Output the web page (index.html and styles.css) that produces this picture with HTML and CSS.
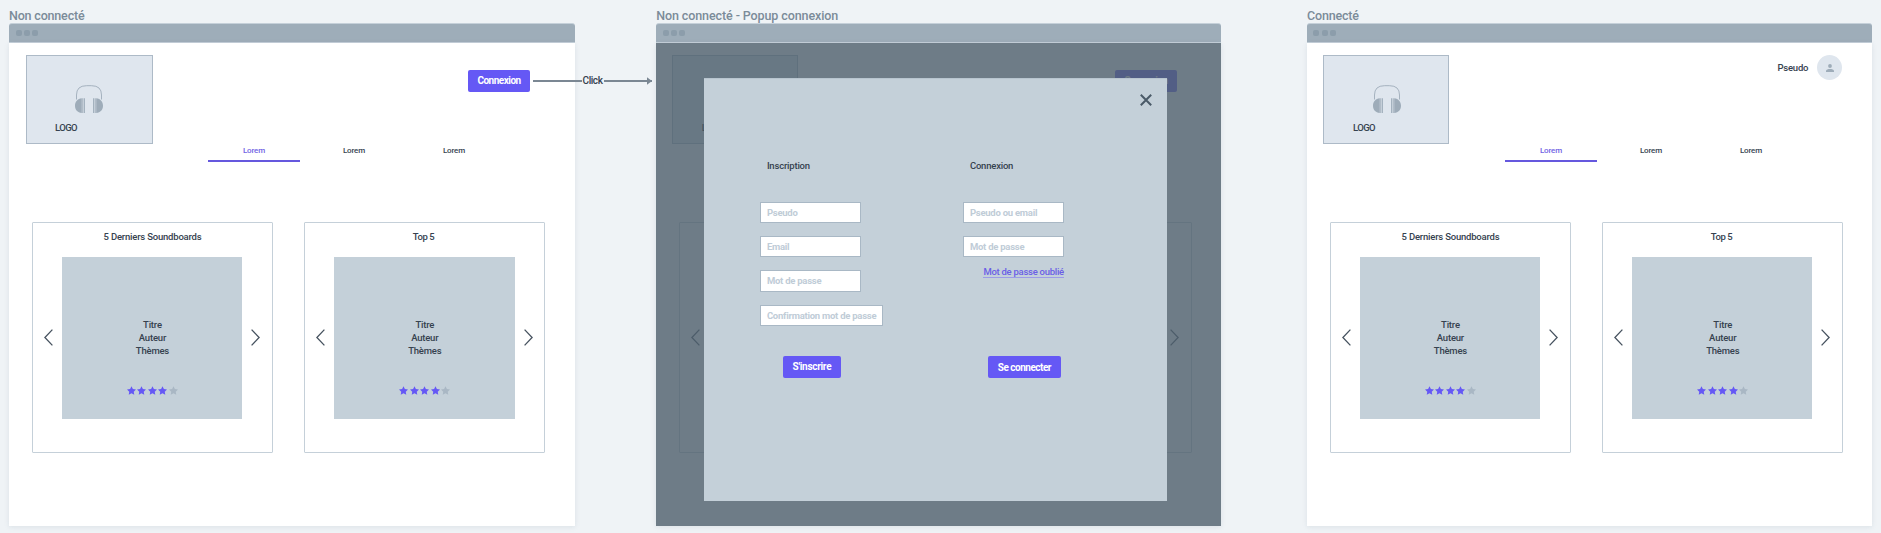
FILE: index.html
```html
<!DOCTYPE html>
<html lang="fr">
<head>
<meta charset="utf-8">
<title>Soundboards - Wireframes</title>
<link rel="stylesheet" href="styles.css">
</head>
<body>
<svg class="defs" aria-hidden="true">
  <symbol id="headphones" viewBox="0 0 28 28">
    <path d="M1.5 14.500V10Q1.500 .7 11.500 .7H16.500Q26.500 .7 26.500 10V14.500" fill="none" stroke="#9eacb9" stroke-width=".9"/>
    <path d="M6.800 13.300V28C2.500 27.700 0 24.500 0 20.700S2.500 13.600 6.800 13.300ZM7.300 13.300H8.300V28H7.300ZM8.900 13.300H9.900V28H8.900ZM21.200 13.300V28C25.500 27.700 28 24.500 28 20.700S25.500 13.600 21.200 13.300ZM19.700 13.300H20.700V28H19.700ZM18.100 13.300H19.100V28H18.100Z" fill="#9eacb9"/>
  </symbol>
  <symbol id="prev" viewBox="0 0 9 17"><path d="M8.400 .6L.9 8.500L8.400 16.400" fill="none" stroke="#46525f" stroke-width="1.300"/></symbol>
  <symbol id="next" viewBox="0 0 9 17"><path d="M.6 .6L8.100 8.500L.6 16.400" fill="none" stroke="#46525f" stroke-width="1.300"/></symbol>
  <symbol id="star" viewBox="0 0 24 24"><path d="M12 .6l3.700 7.500 8.300 1.200-6 5.800 1.400 8.300L12 19.500l-7.400 3.900L6 15.100 0 9.300l8.300-1.200z"/></symbol>
</svg>

<main class="board">
  <section class="frame">
    <h2 class="frame-title t-short">Non connecté</h2>
    <div class="chrome"><i></i><i></i><i></i></div>
    <div class="page">
      <header class="header first">
        <div class="logo"><svg class="headphones"><use href="#headphones"/></svg><span>LOGO</span></div>
        <button class="btn login">Connexion</button>
      </header>
      <nav class="tabs"><a class="active">Lorem</a><a>Lorem</a><a>Lorem</a></nav>
      <div class="cards">
        <article class="card">
          <h3>5 Derniers Soundboards</h3>
          <div class="slider">
            <svg class="arrow"><use href="#prev"/></svg>
            <div class="slide"><p>Titre<br>Auteur<br>Thèmes</p><div class="stars"><svg><use href="#star"/></svg><svg><use href="#star"/></svg><svg><use href="#star"/></svg><svg><use href="#star"/></svg><svg class="off"><use href="#star"/></svg></div></div>
            <svg class="arrow"><use href="#next"/></svg>
          </div>
        </article>
        <article class="card">
          <h3 class="top">Top 5</h3>
          <div class="slider wide">
            <svg class="arrow"><use href="#prev"/></svg>
            <div class="slide"><p>Titre<br>Auteur<br>Thèmes</p><div class="stars"><svg><use href="#star"/></svg><svg><use href="#star"/></svg><svg><use href="#star"/></svg><svg><use href="#star"/></svg><svg class="off"><use href="#star"/></svg></div></div>
            <svg class="arrow"><use href="#next"/></svg>
          </div>
        </article>
      </div>
    </div>
  </section>

  <section class="frame popup">
    <h2 class="frame-title t-long">Non connecté - Popup connexion</h2>
    <div class="chrome"><i></i><i></i><i></i></div>
    <div class="page">
      <header class="header">
        <div class="logo"><span>LOGO</span></div>
        <button class="btn login">Connexion</button>
      </header>
      <nav class="tabs"></nav>
      <div class="cards">
        <article class="card">
          <h3></h3>
          <div class="slider"><svg class="arrow"><use href="#prev"/></svg></div>
        </article>
        <article class="card">
          <h3></h3>
          <div class="slider wide end"><svg class="arrow"><use href="#next"/></svg></div>
        </article>
      </div>
      <div class="overlay"></div>
      <div class="modal">
        <svg class="close" viewBox="0 0 12 12"><path d="M.8 .8L11.200 11.200M11.200 .8L.8 11.200" stroke="#4a5a68" stroke-width="2"/></svg>
        <form class="form">
          <h4>Inscription</h4>
          <div class="field">Pseudo</div>
          <div class="field">Email</div>
          <div class="field">Mot de passe</div>
          <div class="field long">Confirmation mot de passe</div>
          <button type="button" class="btn signup">S'inscrire</button>
        </form>
        <form class="form">
          <h4>Connexion</h4>
          <div class="field">Pseudo ou email</div>
          <div class="field">Mot de passe</div>
          <a class="forgot">Mot de passe oublié</a>
          <button type="button" class="btn signin">Se connecter</button>
        </form>
      </div>
    </div>
  </section>

  <section class="frame logged">
    <h2 class="frame-title t-short">Connecté</h2>
    <div class="chrome"><i></i><i></i><i></i></div>
    <div class="page">
      <header class="header">
        <div class="logo"><svg class="headphones"><use href="#headphones"/></svg><span>LOGO</span></div>
        <div class="user"><span>Pseudo</span>
          <div class="avatar"><svg viewBox="0 0 8 8"><circle cx="4" cy="2" r="1.900"/><path d="M0 8V6.900C0 5.500 2.200 4.900 4 4.900S8 5.500 8 6.900V8Z"/></svg></div>
        </div>
      </header>
      <nav class="tabs"><a class="active">Lorem</a><a>Lorem</a><a>Lorem</a></nav>
      <div class="cards">
        <article class="card">
          <h3>5 Derniers Soundboards</h3>
          <div class="slider">
            <svg class="arrow"><use href="#prev"/></svg>
            <div class="slide"><p>Titre<br>Auteur<br>Thèmes</p><div class="stars"><svg><use href="#star"/></svg><svg><use href="#star"/></svg><svg><use href="#star"/></svg><svg><use href="#star"/></svg><svg class="off"><use href="#star"/></svg></div></div>
            <svg class="arrow"><use href="#next"/></svg>
          </div>
        </article>
        <article class="card">
          <h3 class="top">Top 5</h3>
          <div class="slider wide">
            <svg class="arrow"><use href="#prev"/></svg>
            <div class="slide"><p>Titre<br>Auteur<br>Thèmes</p><div class="stars"><svg><use href="#star"/></svg><svg><use href="#star"/></svg><svg><use href="#star"/></svg><svg><use href="#star"/></svg><svg class="off"><use href="#star"/></svg></div></div>
            <svg class="arrow"><use href="#next"/></svg>
          </div>
        </article>
      </div>
    </div>
  </section>

  <div class="link-arrow"><i></i><span>Click</span><i></i><svg viewBox="0 0 5 8"><path d="M0 .3L5 4L0 7.700Z" fill="#7b8793"/></svg></div>
</main>
</body>
</html>
```
FILE: styles.css
```css
* { box-sizing: border-box; }
body {
  margin: 0;
  background: #eff3f6;
  color: #36424f;
  font: 500 9.5px/13px Roboto, sans-serif;
  letter-spacing: -0.2px;
  white-space: nowrap;
}
h2, h3, h4, p { margin: 0; font: inherit; }
svg { display: block; flex: none; }
.defs { position: absolute; width: 0; height: 0; }

.board {
  position: relative;
  display: flex;
  width: 1881px;
  height: 533px;
  padding-left: 9px;
  overflow: hidden;
}
.frame { flex: none; width: 565.5px; padding-top: 8px; }
.popup { margin-left: 81.7px; width: 565px; }
.logged { margin-left: 85.8px; }
.frame-title {
  height: 15px;
  color: #7b8b99;
  font-size: 12.5px;
  line-height: 16px;
}
.t-short { letter-spacing: -0.18px; }
.t-long { letter-spacing: -0.1px; }

.chrome {
  display: flex;
  align-items: center;
  gap: 2.3px;
  height: 20px;
  padding-left: 6.5px;
  border: solid #c5d0d9;
  border-width: 1px 0;
  border-radius: 3px 3px 0 0;
  background: #9eadb9;
}
.chrome i { width: 6px; height: 6px; border-radius: 2px; background: #8c9dab; }
.page {
  position: relative;
  height: 483px;
  background: #fff;
  box-shadow: 0 1px 5px rgba(100, 120, 140, .14);
}

.header {
  display: flex;
  justify-content: space-between;
  height: 101px;
  padding: 12px 44.2px 0 16px;
}
.header.first { padding-left: 17px; }
.popup .header { padding-right: 44px; }
.logo {
  position: relative;
  width: 126px;
  height: 89px;
  padding: 29px 0 0 49px;
  border: 1px solid #adbac7;
  background: #dfe6ee;
}
.first .logo { width: 126.6px; padding-left: 48px; }
.headphones { width: 28px; height: 28px; }
.logo span {
  display: block;
  margin: 7.5px 0 0 -20px;
  letter-spacing: -0.6px;
}
.popup .logo span { margin: 35.5px 0 0 -20.5px; color: #101820; }
.btn {
  display: flex;
  align-items: center;
  justify-content: center;
  height: 22.2px;
  padding: 0;
  border: 0;
  border-radius: 2px;
  background: #6558f5;
  color: #fff;
  font: 700 10px/13px Roboto, sans-serif;
  letter-spacing: -0.5px;
}
.login { width: 62.5px; margin-top: 14.5px; }
.logged .header { padding-right: 30.2px; }
.user { display: flex; align-items: center; gap: 9px; height: 25px; }
.avatar {
  display: flex;
  align-items: center;
  justify-content: center;
  width: 25px;
  height: 25px;
  border-radius: 50%;
  background: #dfe6ee;
}
.avatar svg { width: 8px; height: 8px; fill: #9eacb9; }

.tabs {
  display: flex;
  gap: 8px;
  height: 18px;
  padding-left: 199px;
  font-size: 8px;
  letter-spacing: -0.15px;
}
.tabs a { width: 92px; height: 18px; line-height: 14px; text-align: center; }
.tabs .active { border-bottom: 2px solid #6558de; color: #7162e4; }
.logged .tabs { padding-left: 198px; }

.cards { display: flex; gap: 31px; margin-top: 60px; padding-left: 23px; }
.card {
  flex: none;
  width: 241px;
  height: 231px;
  padding-top: 7px;
  border: 1px solid #c5d0d9;
  border-radius: 1px;
}
.card h3 { height: 13px; letter-spacing: -0.2px; text-align: center; }
.card .top { padding-right: 2px; letter-spacing: -0.4px; }
.slider {
  display: flex;
  align-items: center;
  gap: 8.5px;
  height: 161.5px;
  margin-top: 14px;
  padding-left: 11.2px;
}
.slider.wide { gap: 9px; padding-left: 11px; }
.slider.end { justify-content: flex-end; padding-right: 12px; }
.arrow { width: 9px; height: 17px; }
.slide {
  width: 180.5px;
  height: 161.5px;
  padding: 60.5px 0 0 1px;
  background: #c4d0d9;
  text-align: center;
}
.stars { display: flex; justify-content: center; gap: 1.5px; margin-top: 29px; }
.stars svg { width: 9px; height: 9px; fill: #6558f5; }
.stars .off { fill: #a9b7c4; }

.overlay { position: absolute; inset: 0; background: rgba(78, 95, 108, .82); }
.modal {
  position: absolute;
  top: 35px;
  left: 47.7px;
  display: flex;
  width: 463px;
  height: 423px;
  padding: 80.5px 0 0 56px;
  border-top: 1px solid #b8c5cf;
  background: #c4d0d9;
}
.close { position: absolute; top: 15px; right: 15px; width: 12px; height: 12px; }
.form { display: flex; flex-direction: column; align-items: flex-start; width: 203px; }
.form h4 { height: 13px; margin: -1px 0 17.5px; padding-left: 7px; letter-spacing: -0.2px; }
.field {
  width: 101px;
  height: 21.5px;
  margin-top: 12.7px;
  padding-left: 6px;
  border: 1px solid #a9b8c5;
  background: #fff;
  color: #c0ccd7;
  font-weight: 700;
  line-height: 19.5px;
  letter-spacing: -0.25px;
}
.field.long { width: 123.5px; margin-top: 13.2px; }
.forgot {
  height: 12.5px;
  margin: 8px 0 0 20.5px;
  border-bottom: 1px solid #9c9be8;
  color: #6a5ee6;
  letter-spacing: -0.27px;
}
.signup { width: 58.5px; margin: 29.5px 0 0 22.8px; letter-spacing: -0.3px; }
.signin { width: 73px; margin: 78.300px 0 0 25px; }

.link-arrow {
  position: absolute;
  top: 74px;
  left: 533px;
  display: flex;
  align-items: center;
  height: 13px;
}
.link-arrow i { width: 48.500px; height: 2px; background: #7b8793; }
.link-arrow span { width: 22px; font-size: 10px; letter-spacing: -0.45px; text-align: center; }
.link-arrow i + svg { width: 5px; height: 8px; margin-left: -5px; }
```
